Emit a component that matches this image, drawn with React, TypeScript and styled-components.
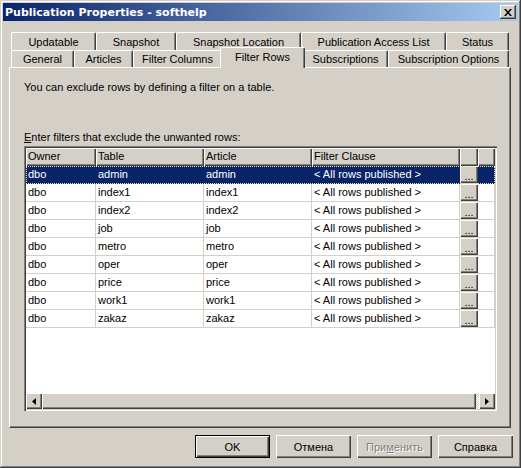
import styled, { createGlobalStyle } from "styled-components";

const GlobalStyle = createGlobalStyle`
  html, body {
    margin: 0;
    padding: 0;
    background: #d4d0c8;
  }
  * {
    box-sizing: border-box;
  }
`;

const face = "#d4d0c8";
const shadow = "#808080";
const dark = "#404040";

const Window = styled.div`
  width: 521px;
  height: 468px;
  padding: 3px;
  display: flex;
  flex-direction: column;
  background: ${face};
  font-family: "Liberation Sans", Arial, sans-serif;
  font-size: 11px;
  color: #000;
  box-shadow: inset -1px -1px ${dark}, inset 1px 1px ${face},
    inset -2px -2px ${shadow}, inset 2px 2px #fff;
`;

const TitleBar = styled.div`
  height: 18px;
  display: flex;
  align-items: center;
  justify-content: space-between;
  padding: 0 2px 0 2px;
  background: linear-gradient(to right, #0a246a, #a6caf0);
`;

const Title = styled.span`
  color: #fff;
  font-family: "DejaVu Sans", "Liberation Sans", sans-serif;
  font-weight: bold;
  font-size: 11px;
`;

const CloseButton = styled.div`
  width: 16px;
  height: 14px;
  display: flex;
  align-items: center;
  justify-content: center;
  background: ${face};
  box-shadow: inset -1px -1px ${dark}, inset 1px 1px #fff,
    inset -2px -2px ${shadow};
`;

const Body = styled.div`
  flex: 1;
  display: flex;
  flex-direction: column;
  padding: 11px 7px 0 6px;
`;

const TabStrip = styled.div`
  display: flex;
  flex-direction: column;
  padding-left: 2px;
`;

const TabRow = styled.div<{ $h: number }>`
  display: flex;
  height: ${(p) => p.$h}px;
`;

const Tab = styled.div<{ $w: number; $active?: boolean }>`
  width: ${(p) => p.$w + (p.$active ? 4 : 0)}px;
  height: ${(p) => (p.$active ? "21px" : "100%")};
  margin: ${(p) => (p.$active ? "-3px -2px -1px -2px" : "0")};
  position: ${(p) => (p.$active ? "relative" : "static")};
  z-index: ${(p) => (p.$active ? 2 : "auto")};
  display: flex;
  align-items: center;
  justify-content: center;
  padding-bottom: ${(p) => (p.$active ? "2px" : "0")};
  background: ${face};
  border-top: 1px solid #fff;
  border-left: 1px solid #fff;
  border-right: 1px solid ${dark};
  border-radius: 2px 2px 0 0;
  box-shadow: inset -1px 0 ${shadow};
  white-space: nowrap;
`;

const Panel = styled.div`
  height: 361px;
  display: flex;
  flex-direction: column;
  padding: 13px 12px 0 14px;
  border-top: 1px solid #fff;
  border-left: 1px solid #fff;
  border-right: 1px solid ${dark};
  border-bottom: 1px solid ${dark};
  box-shadow: inset -1px -1px ${shadow};
`;

const Label = styled.div<{ $gap?: number }>`
  line-height: 13px;
  margin-top: ${(p) => p.$gap ?? 0}px;
`;

const Grid = styled.div`
  margin-top: 2px;
  width: 473px;
  height: 265px;
  display: flex;
  flex-direction: column;
  background: #fff;
  padding: 2px;
  box-shadow: inset 1px 1px ${shadow}, inset 2px 2px ${dark},
    inset -1px -1px #fff, inset -2px -2px ${face};
`;

const GridRow = styled.div<{ $selected?: boolean }>`
  display: grid;
  grid-template-columns: 70px 108px 108px 148px 18px 17px;
  height: 18px;
  outline: ${(p) => (p.$selected ? "1px dotted #e8e2a0" : "none")};
  outline-offset: -1px;
`;

const HeadCell = styled.div`
  background: ${face};
  padding: 0 2px;
  line-height: 17px;
  box-shadow: inset 1px 1px #fff, inset -1px -1px ${dark},
    inset -2px -2px ${shadow};
  white-space: nowrap;
  overflow: hidden;
`;

const Cell = styled.div<{ $selected?: boolean }>`
  padding: 0 2px;
  line-height: 17px;
  background: ${(p) => (p.$selected ? "#0a246a" : "#fff")};
  color: ${(p) => (p.$selected ? "#fff" : "#000")};
  border-right: 1px solid ${(p) => (p.$selected ? "#0a246a" : face)};
  border-bottom: 1px solid ${(p) => (p.$selected ? "#0a246a" : face)};
  white-space: nowrap;
  overflow: hidden;
`;

const ButtonCell = styled.div`
  display: flex;
  background: #fff;
  border-bottom: 1px solid ${face};
`;

const EllipsisButton = styled.div`
  width: 18px;
  height: 17px;
  display: flex;
  align-items: flex-end;
  justify-content: center;
  padding-bottom: 2px;
  line-height: 9px;
  background: ${face};
  box-shadow: inset 1px 1px #fff, inset -1px -1px ${dark},
    inset -2px -2px ${shadow};
`;

const Filler = styled.div`
  flex: 1;
`;

const ScrollBar = styled.div`
  height: 16px;
  display: flex;
  background: #e6e3de;
`;

const ArrowButton = styled.div`
  width: 16px;
  height: 16px;
  display: flex;
  align-items: center;
  justify-content: center;
  background: ${face};
  box-shadow: inset 1px 1px #fff, inset -1px -1px ${dark},
    inset -2px -2px ${shadow};
`;

const Thumb = styled.div`
  width: 434px;
  height: 16px;
  background: ${face};
  box-shadow: inset 1px 1px #fff, inset -1px -1px ${dark},
    inset -2px -2px ${shadow};
`;

const Track = styled.div`
  flex: 1;
  background-image: repeating-conic-gradient(#fff 0 25%, ${face} 0 50%);
  background-size: 2px 2px;
`;

const ButtonBar = styled.div`
  display: flex;
  justify-content: flex-end;
  gap: 6px;
  margin-top: 7px;
  margin-right: -2px;
`;

const DialogButton = styled.div<{ $default?: boolean; $disabled?: boolean }>`
  width: 75px;
  height: 23px;
  display: flex;
  align-items: center;
  justify-content: center;
  font-weight: normal;
  background: ${face};
  color: ${(p) => (p.$disabled ? shadow : "#000")};
  text-shadow: ${(p) => (p.$disabled ? "1px 1px #fff" : "none")};
  border: ${(p) => (p.$default ? "1px solid #000" : "none")};
  box-shadow: inset 1px 1px #fff, inset -1px -1px ${dark},
    inset -2px -2px ${shadow};
`;

const Mnemonic = styled.span`
  text-decoration: underline;
`;

const backTabs = [
  { label: "Updatable", w: 85 },
  { label: "Snapshot", w: 80 },
  { label: "Snapshot Location", w: 125 },
  { label: "Publication Access List", w: 145 },
  { label: "Status", w: 63 },
];

const frontTabs = [
  { label: "General", w: 63 },
  { label: "Articles", w: 59 },
  { label: "Filter Columns", w: 89 },
  { label: "Filter Rows", w: 81, active: true },
  { label: "Subscriptions", w: 85 },
  { label: "Subscription Options", w: 121 },
];

const tables = ["admin", "index1", "index2", "job", "metro", "oper", "price", "work1", "zakaz"];

const App = () => {
  return (
    <>
      <GlobalStyle />
      <Window>
        <TitleBar>
          <Title>Publication Properties - softhelp</Title>
          <CloseButton>
            <svg width="8" height="7" viewBox="0 0 8 7">
              <path d="M0 0h2l2 2.5L6 0h2L5 3.5 8 7H6L4 4.5 2 7H0l3-3.5z" fill="#000" />
            </svg>
          </CloseButton>
        </TitleBar>
        <Body>
          <TabStrip>
            <TabRow $h={18}>
              {backTabs.map((t) => (
                <Tab key={t.label} $w={t.w}>{t.label}</Tab>
              ))}
            </TabRow>
            <TabRow $h={17}>
              {frontTabs.map((t) => (
                <Tab key={t.label} $w={t.w} $active={t.active}>{t.label}</Tab>
              ))}
            </TabRow>
          </TabStrip>
          <Panel>
            <Label>You can exclude rows by defining a filter on a table.</Label>
            <Label $gap={37}>
              <Mnemonic>E</Mnemonic>nter filters that exclude the unwanted rows:
            </Label>
            <Grid>
              <GridRow>
                <HeadCell>Owner</HeadCell>
                <HeadCell>Table</HeadCell>
                <HeadCell>Article</HeadCell>
                <HeadCell>Filter Clause</HeadCell>
                <HeadCell />
                <HeadCell />
              </GridRow>
              {tables.map((name, i) => {
                const sel = i === 0;
                return (
                  <GridRow key={name} $selected={sel}>
                    <Cell $selected={sel}>dbo</Cell>
                    <Cell $selected={sel}>{name}</Cell>
                    <Cell $selected={sel}>{name}</Cell>
                    <Cell $selected={sel}>&lt; All rows published &gt;</Cell>
                    <ButtonCell>
                      <EllipsisButton>...</EllipsisButton>
                    </ButtonCell>
                    <Cell $selected={sel} />
                  </GridRow>
                );
              })}
              <Filler />
              <ScrollBar>
                <ArrowButton>
                  <svg width="4" height="7" viewBox="0 0 4 7">
                    <path d="M4 0v7L0 3.5z" fill="#000" />
                  </svg>
                </ArrowButton>
                <Thumb />
                <Track />
                <ArrowButton>
                  <svg width="4" height="7" viewBox="0 0 4 7">
                    <path d="M0 0v7l4-3.5z" fill="#000" />
                  </svg>
                </ArrowButton>
              </ScrollBar>
            </Grid>
          </Panel>
          <ButtonBar>
            <DialogButton $default>OK</DialogButton>
            <DialogButton>Отмена</DialogButton>
            <DialogButton $disabled>
              При<Mnemonic>м</Mnemonic>енить
            </DialogButton>
            <DialogButton>Справка</DialogButton>
          </ButtonBar>
        </Body>
      </Window>
    </>
  );
};

export default App;
